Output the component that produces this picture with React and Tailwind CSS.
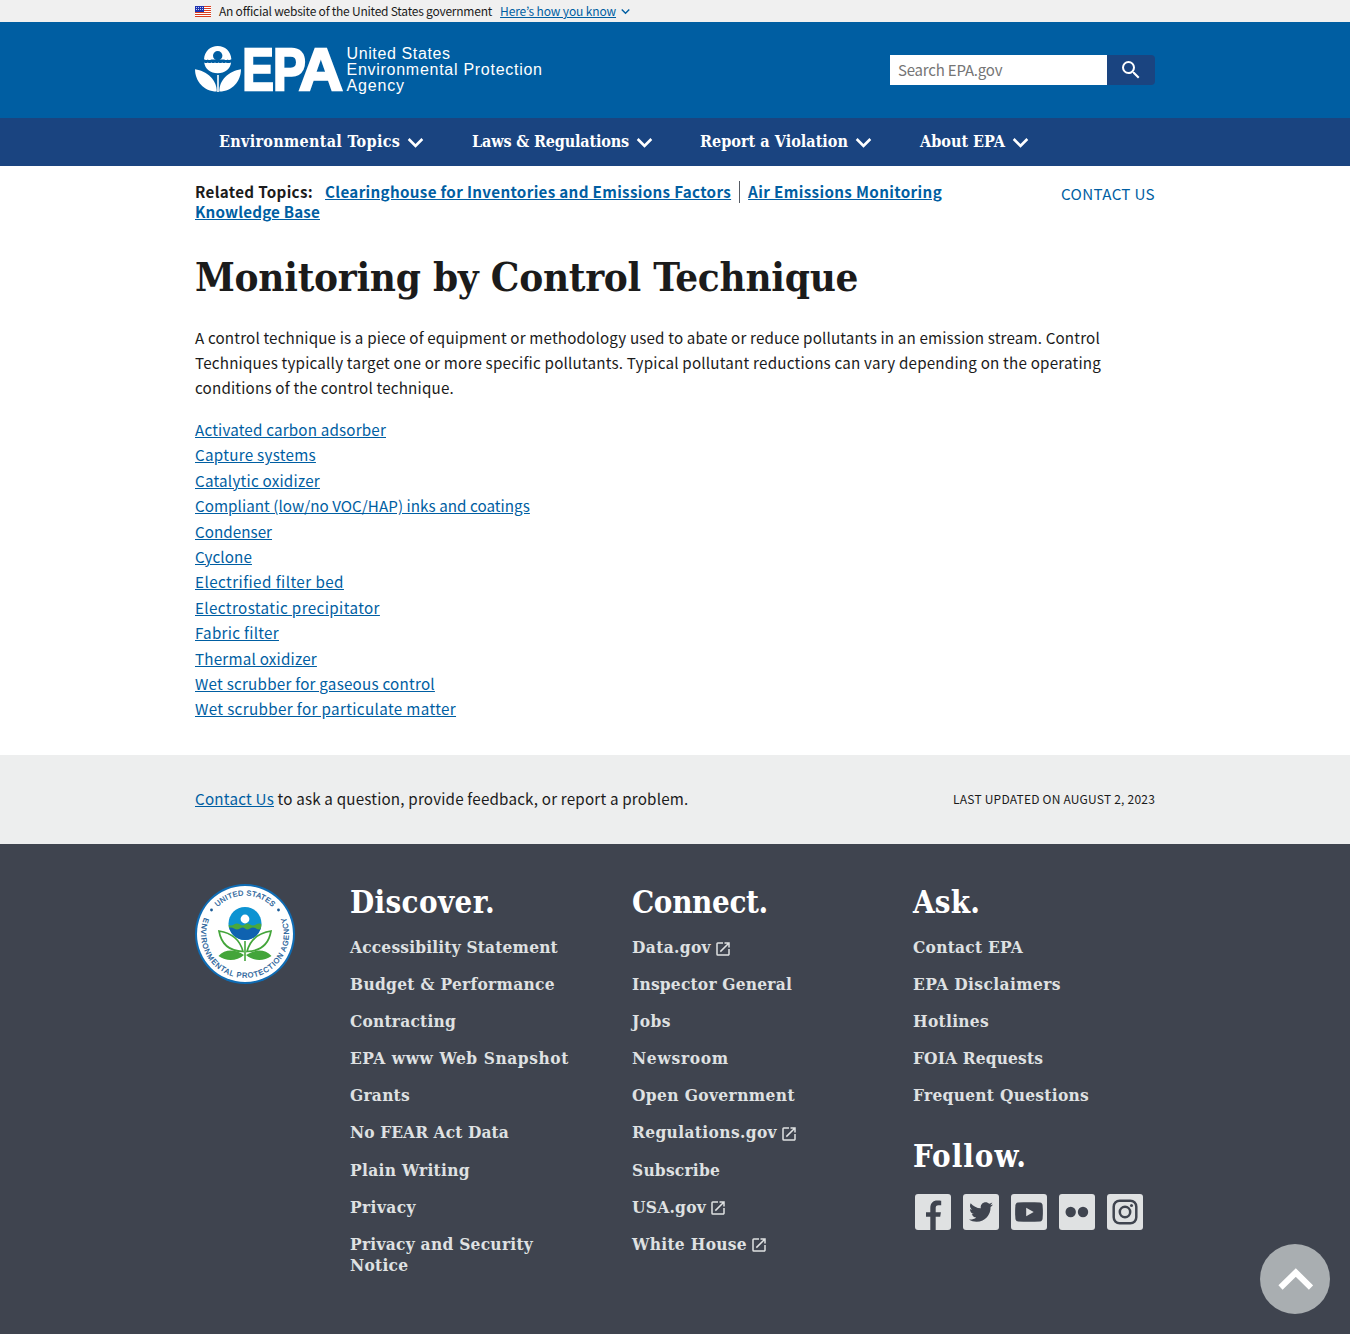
import React from "react";
import { MdSearch, MdLaunch } from "react-icons/md";
import { FaTwitter } from "react-icons/fa";

const SANS = "font-['Noto_Sans_CJK_JP','Noto_Sans',sans-serif]";
const SERIF = "font-['DejaVu_Serif_Condensed','DejaVu_Serif',serif]";

const navItems = [
  { label: "Environmental Topics", width: "w-[253px]", tracking: "tracking-[0.3px]" },
  { label: "Laws & Regulations", width: "w-[228px]", tracking: "tracking-[-0.15px]" },
  { label: "Report a Violation", width: "w-[220px]", tracking: "tracking-[0.04px]" },
  { label: "About EPA", width: "w-[160px]", tracking: "tracking-[0.02px]" },
];

const techniques = [
  { label: "Activated carbon adsorber", tracking: "tracking-[0.18px]" },
  { label: "Capture systems", tracking: "tracking-[0.28px]" },
  { label: "Catalytic oxidizer", tracking: "tracking-[0.23px]" },
  { label: "Compliant (low/no VOC/HAP) inks and coatings", tracking: "tracking-[0.05px]" },
  { label: "Condenser", tracking: "tracking-[0.04px]" },
  { label: "Cyclone", tracking: "tracking-[0.1px]" },
  { label: "Electrified filter bed", tracking: "tracking-[0.44px]" },
  { label: "Electrostatic precipitator", tracking: "tracking-[0.39px]" },
  { label: "Fabric filter", tracking: "tracking-[0.29px]" },
  { label: "Thermal oxidizer", tracking: "tracking-[0.21px]" },
  { label: "Wet scrubber for gaseous control", tracking: "tracking-[0.23px]" },
  { label: "Wet scrubber for particulate matter", tracking: "tracking-[0.36px]" },
];

const discover = [
  { label: "Accessibility Statement", tracking: "tracking-[0.18px]" },
  { label: "Budget & Performance", tracking: "tracking-[0.31px]" },
  { label: "Contracting", tracking: "tracking-[0.21px]" },
  { label: "EPA www Web Snapshot", tracking: "tracking-[0.57px]" },
  { label: "Grants", tracking: "tracking-[0.25px]" },
  { label: "No FEAR Act Data", tracking: "tracking-[0.1px]" },
  { label: "Plain Writing", tracking: "tracking-[0.33px]" },
  { label: "Privacy", tracking: "tracking-[0.42px]" },
  { label: "Privacy and Security Notice", tracking: "tracking-[0.27px]" },
];

const connect = [
  { label: "Data.gov", external: true, tracking: "tracking-[0.36px]" },
  { label: "Inspector General", tracking: "tracking-[0.21px]" },
  { label: "Jobs", tracking: "tracking-[0.46px]" },
  { label: "Newsroom", tracking: "tracking-[0.73px]" },
  { label: "Open Government", tracking: "tracking-[0.39px]" },
  { label: "Regulations.gov", external: true, tracking: "tracking-[0.37px]" },
  { label: "Subscribe", tracking: "tracking-[0.22px]" },
  { label: "USA.gov", external: true, tracking: "tracking-[0.26px]" },
  { label: "White House", external: true, tracking: "tracking-[0.31px]" },
];

const ask = [
  { label: "Contact EPA", tracking: "tracking-[0.26px]" },
  { label: "EPA Disclaimers", tracking: "tracking-[0.41px]" },
  { label: "Hotlines", tracking: "tracking-[0.3px]" },
  { label: "FOIA Requests", tracking: "tracking-[0.14px]" },
  { label: "Frequent Questions", tracking: "tracking-[0.29px]" },
];

function Flag() {
  return (
    <svg width="16" height="11" viewBox="0 0 16 11" className="shrink-0">
      <rect width="16" height="11" fill="#fff" />
      {[0, 2, 4, 6, 8, 10].map((y) => (
        <rect key={y} y={y} width="16" height="1" fill="#db3e1f" />
      ))}
      <rect width="9" height="6" fill="#1e33b1" />
      {[1, 3, 5, 7].map((x) => (
        <g key={x} fill="#fff">
          <rect x={x} y="1" width="1" height="1" opacity="0.75" />
          <rect x={x} y="3" width="1" height="1" opacity="0.75" />
        </g>
      ))}
    </svg>
  );
}

function Chevron({ size, className = "" }) {
  return (
    <svg width={size} height={size} viewBox="0 0 24 24" fill="currentColor" className={className}>
      <path d="M16.59 8.59 12 13.17 7.41 8.59 6 10l6 6 6-6z" />
    </svg>
  );
}

function Logo() {
  return (
    <svg width="350" height="54" viewBox="0 0 350 54" fill="#fff" className="block overflow-visible font-['Liberation_Sans',sans-serif]">
      {/* flower */}
      <path d="M9 15.200C9.600 7 15.400 2 22.700 2s13.100 5 13.700 13.200c-1.400 1-2.600 1-3.700.2-1.100.8-2.300.8-3.500 0H16.200c-1.200.8-2.300.8-3.500 0-1.200.8-2.300.8-3.700-.2z" />
      <circle cx="22.700" cy="11.800" r="4.700" fill="#005ea2" />
      <path d="M9.200 18.500c1.300.8 2.500.8 3.600 0 1.200.8 2.400.8 3.600 0 1.200.8 2.400.8 3.600 0 1.200.8 2.400.8 3.600 0 1.200.8 2.400.8 3.600 0 1.200.8 2.400.8 3.600 0 1.300.8 3 .8 5.300 0C35.300 25 30 29.300 22.700 29.300S10 25 9.200 18.500z" />
      <path d="M0 25.200C.2 37.500 8.500 47 21.700 47.600 22.200 36.800 12.500 26.800 0 25.200z" />
      <path d="M46 25.200C45.800 37.500 37.500 47 24.300 47.600 23.800 36.800 33.500 26.800 46 25.200z" />
      <path d="M22.200 31h1.600v17h-1.600z" />
      {/* wordmark */}
      <g fontWeight="700" fontSize="60" stroke="#fff" strokeWidth="2.400">
        <text transform="translate(47.200 46) scale(.79 1)">E</text>
        <text transform="translate(78 46) scale(.82 1)">P</text>
        <text transform="translate(103.700 46) scale(1.020 1)">A</text>
      </g>
      <g fontSize="16">
        <text x="151.500" y="14.500" textLength="103.500">United States</text>
        <text x="151.500" y="31" textLength="195.500">Environmental Protection</text>
        <text x="151.500" y="47.200" textLength="57.500">Agency</text>
      </g>
    </svg>
  );
}

function Seal() {
  return (
    <svg width="100" height="100" viewBox="-50 -50 100 100" className="block font-['Liberation_Sans',sans-serif]">
      <defs>
        <path id="arc-top" d="M-38.500 0A38.500 38.500 0 0 1 38.500 0" />
        <path id="arc-bottom" d="M-40.400 -17.200A43.900 43.900 0 1 0 40.400 -17.200" />
        <clipPath id="bloom">
          <circle cy="-10.500" r="16.500" />
        </clipPath>
      </defs>
      <circle r="50" fill="#0f6cb4" />
      <circle r="48" fill="#fff" />
      <g fill="#1a5a96" fontSize="7.400">
        <text textAnchor="middle" stroke="#1a5a96" strokeWidth=".25">
          <textPath href="#arc-top" startOffset="50%" textLength="61">UNITED STATES</textPath>
        </text>
        <text stroke="#1a5a96" strokeWidth=".25">
          <textPath href="#arc-bottom" startOffset="1" textLength="171">ENVIRONMENTAL PROTECTION AGENCY</textPath>
        </text>
      </g>
      <circle cx="-33.500" cy="-24" r="1.400" fill="#1a5a96" />
      <circle cx="33.500" cy="-24" r="1.400" fill="#1a5a96" />
      <g clipPath="url(#bloom)">
        <rect x="-17" y="-28" width="34" height="36" fill="#0d93d2" />
        <rect x="-17" y="-7" width="34" height="15" fill="#0f62b0" />
        <path d="M-17-9.500q3 2 6 0t6 0 5 0 5 0 6 0 6 0v4q-3 2-6 0t-6 0-5 0-5 0-6 0-6 0z" fill="#4aa83c" />
      </g>
      <circle cy="-15" r="4.400" fill="#fff" />
      <g fill="#fff" stroke="#43a53a" strokeWidth="1.700">
        <path d="M-2 17.500C-5 6-13-1-26-3-24 9-17 17-2 17.500z" />
        <path d="M2 17.500C5 6 13-1 26-3 24 9 17 17 2 17.500z" />
      </g>
      <path d="M-26.500 22C-20 15-10 15-1 21-8 27-18 28-26.500 22zM26.500 22C20 15 10 15 1 21 8 27 18 28 26.500 22z" fill="#43a53a" />
      <path d="M-.8 7h1.600v20h-1.600z" fill="#43a53a" />
    </svg>
  );
}

function SocialTile({ children }) {
  return (
    <a className="flex size-9 items-center justify-center overflow-hidden rounded-[3px] bg-[#dfe1e2] text-[#3f444f]">
      {children}
    </a>
  );
}

function FooterColumn({ title, tracking, items, children }) {
  return (
    <div>
      <h2 className={`h-10 text-[31px] leading-9 font-bold text-white ${tracking}`}>{title}</h2>
      <ul className="mt-[13px] flex flex-col gap-[15.900px] text-[17.200px] leading-[21.200px] font-bold text-[#dfe1e2]">
        {items.map((item) => (
          <li key={item.label} className="flex items-center">
            <a className={item.tracking}>{item.label}</a>
            {item.external && <MdLaunch size={18} className="relative top-px ml-[3px] -my-1" />}
          </li>
        ))}
      </ul>
      {children}
    </div>
  );
}

export default function App() {
  return (
    <div className={`min-h-[1334px] w-full bg-white text-[#1b1b1b] ${SANS}`}>
      <div className="h-[22px] bg-[#f0f0f0]">
        <div className="mx-auto flex h-full w-[960px] items-center text-xs leading-4">
          <Flag />
          <span className="ml-2 tracking-[-0.23px] whitespace-nowrap">An official website of the United States government</span>
          <a className="ml-2 tracking-[-0.13px] whitespace-nowrap text-[#005ea2] underline">Here’s how you know</a>
          <Chevron size={17} className="ml-[1px] text-[#005ea2]" />
        </div>
      </div>

      <header className="h-24 bg-[#005ea2]">
        <div className="mx-auto flex w-[960px] justify-between">
          <div className="pt-[22px]"><Logo /></div>
          <form className="mt-[33px] flex h-[30px]">
            <div className="flex w-[217px] items-center bg-white pl-2 text-[15px] tracking-[-0.2px] text-[#757575]">Search EPA.gov</div>
            <button type="button" className="flex w-12 items-center justify-center rounded-r bg-[#1a4480] text-white">
              <MdSearch size={24} />
            </button>
          </form>
        </div>
      </header>

      <nav className={`h-12 bg-[#1a4480] text-white ${SERIF}`}>
        <div className="mx-auto flex h-full w-[960px] items-center pl-6">
          {navItems.map((item) => (
            <a key={item.label} className={`flex items-center text-base font-bold ${item.width}`}>
              <span className={`whitespace-nowrap ${item.tracking}`}>{item.label}</span>
              <Chevron size={31} />
            </a>
          ))}
        </div>
      </nav>

      <main className="mx-auto h-[589px] w-[960px]">
        <div className="flex h-[66px] justify-between pt-[15px]">
          <div className="text-[15.200px] leading-5 font-bold">
            <div className="flex h-5 items-center">
              <span className="tracking-[0.32px]">Related Topics:</span>
              <a className="ml-3 tracking-[0.32px] text-[#005ea2] underline">Clearinghouse for Inventories and Emissions Factors</a>
              <span className="mt-0.5 ml-2 h-[22px] border-l border-[#565c65] pl-2" />
              <a className="tracking-[0.36px] text-[#005ea2] underline">Air Emissions Monitoring</a>
            </div>
            <a className="tracking-[0.16px] text-[#005ea2] underline">Knowledge Base</a>
          </div>
          <a className="mt-0.5 h-5 text-[15.200px] leading-5 tracking-[0.33px] text-[#005ea2]">CONTACT US</a>
        </div>
        <h1 className={`mt-[21px] h-12 text-[40px] leading-12 font-bold tracking-[-0.26px] whitespace-nowrap ${SERIF}`}>Monitoring by Control Technique</h1>
        <p className="mt-[23.500px] text-[15.200px] leading-[25.200px] whitespace-nowrap">
          <span className="tracking-[0.155px]">A control technique is a piece of equipment or methodology used to abate or reduce pollutants in an emission stream. Control</span><br />
          <span className="tracking-[0.2px]">Techniques typically target one or more specific pollutants. Typical pollutant reductions can vary depending on the operating</span><br />
          <span className="tracking-[0.18px]">conditions of the control technique.</span>
        </p>
        <ul className="mt-[16.800px] text-[15.200px] leading-[25.400px] text-[#005ea2]">
          {techniques.map((t) => (
            <li key={t.label}><a className={`underline ${t.tracking}`}>{t.label}</a></li>
          ))}
        </ul>
      </main>

      <section className="h-[89px] bg-[#edeeee]">
        <div className="mx-auto flex h-full w-[960px] items-center justify-between pb-0.5">
          <p className="text-[15.200px] tracking-[0.18px]"><a className="tracking-[0.22px] text-[#005ea2] underline">Contact Us</a> to ask a question, provide feedback, or report a problem.</p>
          <p className="text-xs tracking-[0.21px]">LAST UPDATED ON AUGUST 2, 2023</p>
        </div>
      </section>

      <footer className={`h-[490px] bg-[#3f444f] ${SERIF}`}>
        <div className="mx-auto grid w-[960px] grid-cols-[155px_282px_281px_242px] pt-10">
          <Seal />
          <div className="w-[233px]"><FooterColumn title="Discover." tracking="tracking-[0.38px]" items={discover} /></div>
          <FooterColumn title="Connect." tracking="tracking-[-0.34px]" items={connect} />
          <FooterColumn title="Ask." tracking="tracking-[0.16px]" items={ask}>
            <h2 className="mt-[31px] text-[31px] leading-9 font-bold tracking-[0.99px] text-white">Follow.</h2>
            <div className="mt-5 ml-0.5 flex gap-3">
              <SocialTile>
                <svg width="36" height="36" viewBox="0 0 36 36" fill="currentColor"><path d="M15.300 36V22.800H11v-4.600h4.300v-4.300c0-4.900 2.800-7.500 7-7.500 1.700 0 3.300.2 3.900.3v4.500h-2.700c-2.300 0-2.800 1.200-2.800 2.800v4.200h5.200l-.7 4.600h-4.500V36z" /></svg>
              </SocialTile>
              <SocialTile><FaTwitter size={24} /></SocialTile>
              <SocialTile>
                <svg width="28" height="20" viewBox="0 0 28 20"><path d="M3 .6C10 0 18 0 25 .6c1.700.2 2.400 1.200 2.600 3 .4 4 .4 8.800 0 12.800-.2 1.800-.9 2.800-2.600 3-7 .6-15 .6-22 0-1.700-.2-2.400-1.200-2.600-3C0 12.400 0 7.600.4 3.600.6 1.800 1.300.8 3 .6z" fill="currentColor" /><path d="M11.200 5.700v8.600l7.500-4.300z" fill="#dfe1e2" /></svg>
              </SocialTile>
              <SocialTile>
                <svg width="24" height="12" viewBox="0 0 24 12" fill="currentColor"><circle cx="5.700" cy="6" r="5.200" /><circle cx="18" cy="6" r="5.200" /></svg>
              </SocialTile>
              <SocialTile>
                <svg width="26" height="26" viewBox="0 0 26 26" fill="none" stroke="currentColor" strokeWidth="2.500"><rect x="1.700" y="1.700" width="22.600" height="22.600" rx="6" /><circle cx="13" cy="13" r="5.200" /><circle cx="19.500" cy="6.500" r="1.500" fill="currentColor" stroke="none" /></svg>
              </SocialTile>
            </div>
          </FooterColumn>
        </div>
      </footer>

      <a className="fixed right-5 bottom-5 flex size-[70px] items-center justify-center rounded-full bg-[#a9aeb1]">
        <svg width="36" height="24" viewBox="0 0 36 24" fill="none" stroke="#fff" strokeWidth="6"><path d="M3.500 20.500 18.800 5.500 34 20.500" /></svg>
      </a>
    </div>
  );
}
